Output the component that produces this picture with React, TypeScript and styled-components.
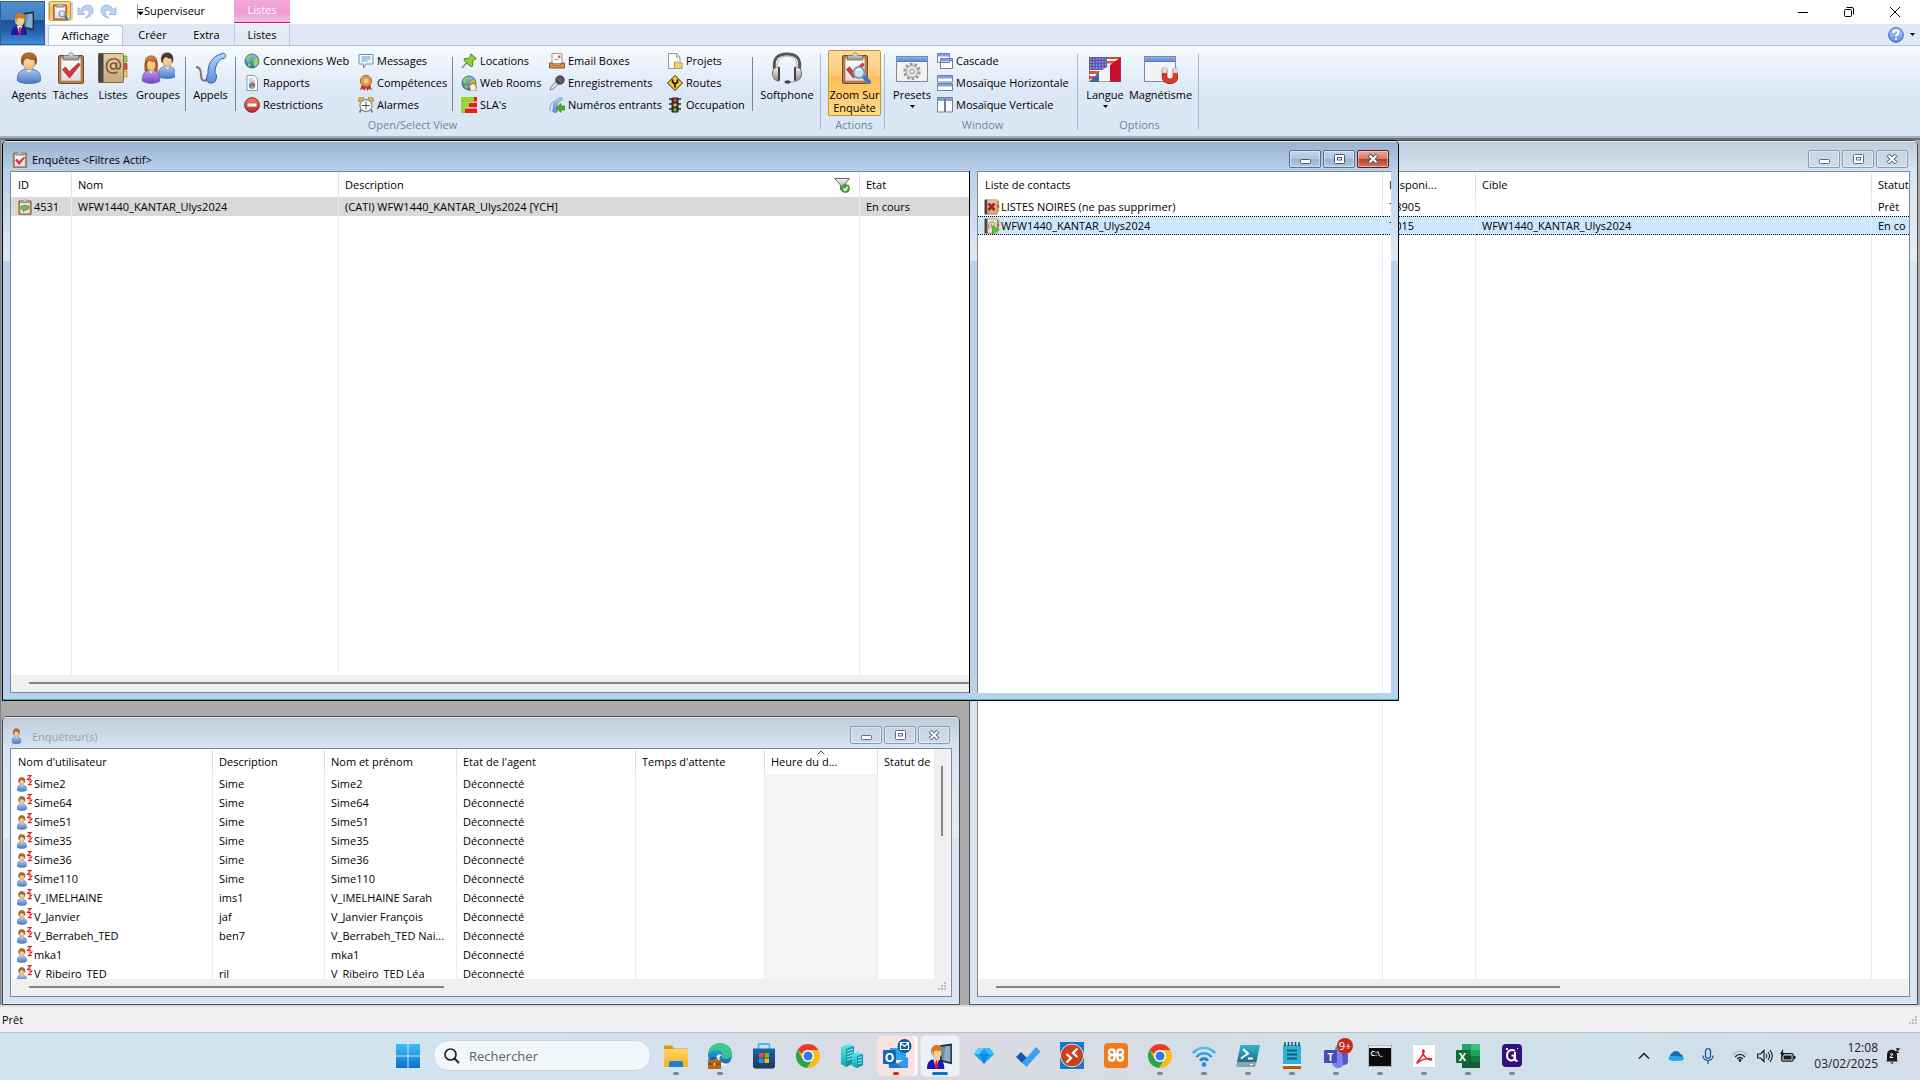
import React from "react";
import styled, { createGlobalStyle, css } from "styled-components";

const uiFont = `"Open Sans", "Noto Sans", "Liberation Sans", sans-serif`;

const GlobalStyle = createGlobalStyle`
  * { box-sizing: border-box; }
  body { margin: 0; overflow: hidden; }
  button, input { font: inherit; color: inherit; }
  button { border: 0; background: none; padding: 0; }
  svg { display: block; flex: none; }
`;

const Screen = styled.div`
  display: flex;
  flex-direction: column;
  height: 100vh;
  font-family: ${uiFont};
  font-size: 11px;
  line-height: 16px;
  color: #000;
  background: #fff;
`;

/* ---------- header ---------- */

const Header = styled.header`
  display: flex;
  flex: none;
  height: 45px;
  background: linear-gradient(#fff 24px, #dfe8f4 24px);
`;

const AppButton = styled.button`
  width: 45px;
  height: 44px;
  margin-top: 1px;
  display: flex;
  align-items: center;
  justify-content: center;
  border: 1px solid #2c5aa5;
  background: linear-gradient(#4f8fce 0, #3f7fc2 42%, #1c4f97 43%, #2660a8 70%, #3f8fd6 100%);
`;

const HeaderRows = styled.div`
  flex: 1;
  display: flex;
  flex-direction: column;
`;

const TitleRow = styled.div`
  height: 24px;
  display: flex;
  align-items: flex-start;
  padding-right: 2px;
`;

const QuickAccess = styled.div`
  width: 99px;
  display: flex;
  align-items: center;
  height: 22px;
  padding-left: 4px;
  gap: 6px;
`;

const QuickButton = styled.button<{ $on?: boolean }>`
  height: 20px;
  width: ${(p) => (p.$on ? 22 : 17)}px;
  display: flex;
  align-items: center;
  justify-content: center;
  ${(p) =>
    p.$on &&
    css`
      border: 1px solid #c29b29;
      border-radius: 2px;
      background: linear-gradient(#ffd58a, #ffbf4f 50%, #ffd27a);
      box-shadow: -2px 0 0 -1px #c8cdd6, 3px 0 0 -1px #c8cdd6;
    `}
`;

const AppTitle = styled.h1`
  width: 90px;
  margin: 0;
  font-size: 11px;
  font-weight: 400;
  line-height: 22px;
`;

const ContextLabel = styled.div`
  width: 56px;
  height: 23px;
  text-align: center;
  line-height: 20px;
  color: #fff;
  background: linear-gradient(#f3a9d5, #ee9ccf 50%, #f0b0da 80%, #f3c0e2);
  border-bottom: 1px solid #d0107f;
`;

const Spacer = styled.div`
  flex: 1;
`;

const CaptionButton = styled.button`
  width: 46px;
  height: 24px;
  display: flex;
  align-items: center;
  justify-content: center;
`;

const TabRow = styled.nav`
  height: 21px;
  display: flex;
  align-items: flex-end;
  padding-left: 3px;
`;

const Tab = styled.button<{ $w: number; $active?: boolean; $context?: boolean }>`
  width: ${(p) => p.$w}px;
  height: ${(p) => (p.$active ? 20 : 21)}px;
  line-height: 20px;
  ${(p) =>
    p.$active &&
    css`
      border: 1px solid #b3c6dc;
      border-bottom: 0;
      border-radius: 3px 3px 0 0;
      background: #f8fbff;
      line-height: 19px;
    `}
  ${(p) =>
    p.$context &&
    css`
      margin-left: 3px;
      border-left: 1px solid #c0cbdc;
      border-right: 1px solid #c0cbdc;
      background: linear-gradient(#e9edf7, #dfe8f4);
    `}
`;

const HelpButtons = styled.div`
  display: flex;
  align-items: center;
  height: 21px;
  gap: 6px;
  padding-right: 5px;
`;

/* ---------- ribbon ---------- */

const Ribbon = styled.section`
  flex: none;
  height: 93px;
  display: flex;
  padding: 0 0 0 2px;
  border-top: 1px solid #b3c6dc;
  border-bottom: 2px solid #9fb0c6;
  background: linear-gradient(#f8fbff 0, #e8f1fb 24px, #dce7f5 48px, #dce7f5 100%);
`;

const Group = styled.div`
  display: flex;
  flex-direction: column;
  padding: 4px 3px 0 6px;
  background: linear-gradient(#a5b9d2, #a5b9d2) right 8px / 1px 76px no-repeat;
  border-right: 1px solid transparent;
  background-origin: border-box;
`;

const GroupBody = styled.div`
  display: flex;
  height: 67px;
`;

const GroupLabel = styled.div`
  text-align: center;
  color: #72839c;
  line-height: 16px;
`;

const BigButton = styled.button<{ $w: number; $on?: boolean }>`
  width: ${(p) => p.$w}px;
  height: 66px;
  display: flex;
  flex-direction: column;
  align-items: center;
  gap: 4px;
  padding-top: 2px;
  line-height: 13px;
  white-space: nowrap;
  ${(p) =>
    p.$on &&
    css`
      margin-left: 1px;
      padding-top: 1px;
      border: 1px solid #c29b29;
      border-radius: 2px;
      background: linear-gradient(#fdd9a0, #fecb7c 38%, #ffbe55 40%, #ffd98b);
    `}
`;

const Rule = styled.span`
  width: 1px;
  height: 54px;
  margin: 7px 4px 0;
  background: #7d858f;
`;

const SmallColumn = styled.div<{ $w: number }>`
  width: ${(p) => p.$w}px;
  display: flex;
  flex-direction: column;
`;

const SmallButton = styled.button`
  height: 22px;
  display: flex;
  align-items: center;
  gap: 3px;
  padding-left: 4px;
  white-space: nowrap;
`;

/* ---------- MDI area ---------- */

const Workspace = styled.main`
  flex: 1;
  position: relative;
  min-height: 0;
  overflow: hidden;
  border-top: 2px solid #6f6f6f;
  background: #ababab;
  box-shadow: inset 1px 0 0 #808080;
`;

const activeFrame = "linear-gradient(#b9d1ea, #dfe9f5 90px, #b9d1ea 90px)";
const idleFrame = "linear-gradient(#d7e4f2, #e6eef7 90px, #d7e4f2 90px)";

const MdiWindow = styled.section<{ $active?: boolean }>`
  position: absolute;
  display: flex;
  flex-direction: column;
  overflow: hidden;
  border: 1px solid ${(p) => (p.$active ? "#000" : "#4a4a4a")};
  border-radius: 5px 5px 0 0;
`;

const SurveyWindow = styled(MdiWindow)`
  left: 2px;
  top: 0;
  width: 1397px;
  height: 561px;
  pointer-events: none;
`;

const AgentWindow = styled(MdiWindow)`
  left: 2px;
  bottom: 0;
  width: 958px;
  height: 289px;
`;

const ContactWindow = styled(MdiWindow)`
  left: 969px;
  right: 2px;
  top: 0;
  bottom: 0;
`;

const WindowTitle = styled.div<{ $active?: boolean; $tall?: boolean }>`
  flex: none;
  height: ${(p) => (p.$tall ? 31 : 30)}px;
  display: flex;
  gap: 2px;
  padding: 9px 9px 0;
  line-height: ${(p) => (p.$tall ? 22 : 20)}px;
  color: ${(p) => (p.$active ? "#000" : "#9a9fa6")};
  background: ${(p) =>
    p.$active ? "linear-gradient(#98b2d0, #b9d1ea)" : "linear-gradient(#bfcddb, #d7e4f2)"};
  box-shadow: inset 0 1px 0 #e8eff7;
`;

const WindowName = styled.h2`
  flex: 1;
  margin: 0;
  font-size: inherit;
  font-weight: 400;
`;

const WindowButton = styled.button<{ $active?: boolean; $close?: boolean }>`
  width: 32px;
  height: 18px;
  display: flex;
  align-items: center;
  justify-content: center;
  border-radius: 2px;
  border: 1px solid ${(p) => (p.$active ? (p.$close ? "#5c1620" : "#5a6f8c") : "#8797b4")};
  box-shadow: inset 0 0 0 1px rgba(255, 255, 255, 0.45);
  background: ${(p) =>
    p.$active
      ? p.$close
        ? "linear-gradient(#e9a99a, #d9796a 48%, #b8381f 50%, #d4765f)"
        : "linear-gradient(#c3d4e8, #b2c8e0 48%, #96b1d0 50%, #b1cae4)"
      : "linear-gradient(#c8d4e1, #cfdbe9)"};
`;

const WindowMiddle = styled.div`
  flex: 1;
  min-height: 0;
  display: flex;
`;

const Side = styled.span<{ $active?: boolean }>`
  flex: none;
  width: 7px;
  background: ${(p) => (p.$active ? activeFrame : idleFrame)};
`;

const Splitter = styled.span`
  flex: none;
  width: 8px;
  border-left: 1px solid #000;
  background: ${activeFrame};
`;

const Opening = styled.div`
  flex: 1;
`;

const WindowFoot = styled.div<{ $active?: boolean }>`
  flex: none;
  height: 7px;
  background: ${(p) => (p.$active ? "#b9d1ea" : "#d7e4f2")};
  border-bottom: 1px solid ${(p) => (p.$active ? "#38b8d0" : "#e6eef7")};
`;

const Client = styled.div<{ $open?: boolean }>`
  flex: ${(p) => (p.$open ? "0 0 959px" : 1)};
  min-width: 0;
  display: flex;
  flex-direction: column;
  border: 1px solid #828790;
  border-right-width: ${(p) => (p.$open ? 0 : 1)}px;
  background: #fff;
`;

const ListArea = styled.div`
  flex: 1;
  min-height: 0;
  display: flex;
  overflow: hidden;
`;

const TableHolder = styled.div`
  flex: 1;
  min-width: 0;
  overflow: hidden;
`;

const Table = styled.table`
  width: 100%;
  height: 100%;
  table-layout: fixed;
  border-collapse: separate;
  border-spacing: 0;
`;

const HeadCell = styled.th`
  height: 25px;
  padding: 1px 0 0 6px;
  text-align: left;
  font-weight: 400;
  white-space: nowrap;
  overflow: hidden;
  position: relative;
  border-right: 1px solid #e2e2e2;
  &:first-child { padding-left: 7px; }
  &:last-child { border-right: 0; }
`;

const HeadContent = styled.span`
  display: flex;
  align-items: center;
  justify-content: space-between;
  padding-right: 9px;
`;

const SortMark = styled.span`
  position: absolute;
  top: 1px;
  left: 46%;
`;

const Row = styled.tr<{ $state?: "grey" | "blue" }>`
  height: 19px;
  ${(p) => p.$state === "grey" && "background: #d9d9d9;"}
  ${(p) =>
    p.$state === "blue" &&
    css`
      background: #cce8ff;
      & > td { border-top: 1px dotted #000; border-bottom: 1px dotted #000; }
    `}
`;

const Cell = styled.td<{ $shade?: boolean }>`
  padding: 0 0 0 6px;
  overflow: hidden;
  white-space: nowrap;
  line-height: 17px;
  border-right: 1px solid #e5effb;
  ${(p) => p.$shade && "background: #f5f5f5;"}
  &:last-child { border-right: 0; }
`;

const IconText = styled.span`
  display: flex;
  align-items: center;
  gap: 1px;
`;

const HScroll = styled.div<{ $flush?: boolean }>`
  flex: none;
  height: 17px;
  display: flex;
  align-items: center;
  justify-content: space-between;
  padding: 0 ${(p) => (p.$flush ? 0 : 4)}px 2px 18px;
  background: #f0f0f0;
`;

const HThumb = styled.span<{ $w: string }>`
  width: ${(p) => p.$w};
  height: 2px;
  background: #858585;
`;

const VScroll = styled.div`
  flex: none;
  width: 17px;
  padding: 17px 0 0 7px;
  background: #f0f0f0;
`;

const VThumb = styled.span`
  display: block;
  width: 2px;
  height: 70px;
  background: #858585;
`;

const StatusBar = styled.footer`
  flex: none;
  height: 27px;
  display: flex;
  align-items: center;
  justify-content: space-between;
  padding: 1px 2px 0;
  background: #f0f0f0;
  border-top: 2px solid #dcdcdc;
`;

/* ---------- taskbar ---------- */

const Taskbar = styled.div`
  flex: none;
  height: 48px;
  display: grid;
  grid-template-columns: 1fr auto 1fr;
  align-items: center;
  padding-bottom: 2px;
  border-top: 1px solid #b4c1cd;
  background: linear-gradient(90deg, #d0e5ef 0, #d2e4ef 22%, #d5e1ee 36%, #d9dae0 48%, #d8dbe2 56%, #d2e0ea 68%, #cfe1ea 84%, #d3deea 100%);
`;

const TaskItems = styled.div`
  grid-column: 2;
  display: flex;
  align-items: center;
`;

const TaskButton = styled.button<{ $tone?: "alert" | "active" }>`
  position: relative;
  width: 38px;
  height: 40px;
  margin: 0 3px;
  display: flex;
  align-items: center;
  justify-content: center;
  border-radius: 4px;
  ${(p) => p.$tone === "alert" && "background: #fbe3e5; box-shadow: 2px 0 0 #fff, 3px 0 0 #fbe3e5;"}
  ${(p) => p.$tone === "active" && "background: #edf1f6; box-shadow: 0 0 0 1px #dfe4ea;"}
`;

const RunMark = styled.span<{ $kind: "run" | "active" | "alert" }>`
  position: absolute;
  bottom: 1px;
  left: 50%;
  width: ${(p) => (p.$kind === "active" ? 16 : 6)}px;
  height: 3px;
  border-radius: 2px;
  transform: translateX(-50%);
  background: ${(p) => ({ run: "#7f868c", active: "#0a74d0", alert: "#c42b1c" })[p.$kind]};
`;

const Badge = styled.span`
  position: absolute;
  top: 2px;
  right: 2px;
  width: 16px;
  height: 16px;
  border-radius: 8px;
  background: #c42b1c;
  color: #fff;
  font-size: 11px;
  line-height: 16px;
  text-align: center;
`;

const SearchBox = styled.label`
  width: 218px;
  height: 31px;
  margin: 0 3px;
  display: flex;
  align-items: center;
  gap: 9px;
  padding-left: 10px;
  border-radius: 16px;
  border: 1px solid #c9d6e0;
  background: #f2f7fb;
`;

const SearchInput = styled.input`
  flex: 1;
  min-width: 0;
  border: 0;
  padding: 0;
  outline: 0;
  background: transparent;
  font-size: 13px;
  &::placeholder { color: #5d6063; opacity: 1; }
`;

const Tray = styled.div`
  justify-self: end;
  display: flex;
  align-items: center;
  padding-right: 19px;
`;

const TrayButton = styled.button<{ $w: number }>`
  width: ${(p) => p.$w}px;
  height: 32px;
  display: flex;
  align-items: center;
  justify-content: center;
`;

const Clock = styled.time`
  width: 77px;
  margin-right: 6px;
  text-align: right;
  font-size: 12px;
  line-height: 16px;
  color: #1b1b1b;
`;

/* ---------- icons ---------- */

type SvgProps = { w?: number; h?: number; box?: string; children: React.ReactNode };
const Svg = ({ w = 16, h, box, children }: SvgProps) => (
  <svg width={w} height={h ?? w} viewBox={box ?? `0 0 ${w} ${h ?? w}`} fill="none" aria-hidden="true">
    {children}
  </svg>
);

const PaintSheet = styled.svg`
  position: absolute;
`;

const lin = (id: string, a: string, b: string) => (
  <linearGradient id={id} x1="0" y1="0" x2="0" y2="1">
    <stop offset="0" stopColor={a} />
    <stop offset="1" stopColor={b} />
  </linearGradient>
);

const SharedPaint = () => (
  <PaintSheet width="0" height="0" aria-hidden="true">
    <defs>
      {lin("bodyBlue", "#a9c6f2", "#4a78c4")}
      {lin("bodyViolet", "#c79bea", "#7a3fc0")}
      {lin("hairBrown", "#c17a32", "#7a4310")}
      {lin("hairRed", "#e08a3a", "#a5500f")}
      {lin("hairDark", "#4a4a4a", "#1a1a1a")}
      {lin("skin", "#fde0b6", "#f0b878")}
      {lin("paper", "#ffffff", "#dcdce2")}
      {lin("book", "#e5cda8", "#c9a878")}
      {lin("phone", "#b8d3fa", "#5a8ce0")}
      {lin("globe", "#8fc0f5", "#2f6cc0")}
      {lin("red", "#f08070", "#b82a20")}
      {lin("steel", "#f4f4f4", "#8a8a8a")}
      {lin("winBar", "#8db3f0", "#4d7bd0")}
      {lin("folder", "#ffd766", "#f2b01e")}
      {lin("winLogo", "#3ec0f8", "#0a6fd0")}
      {lin("edge", "#2fc2d8", "#0d5bb5")}
      {lin("store", "#1b67b0", "#1d3563")}
      {lin("azure", "#5fe8e8", "#10a5b5")}
      {lin("wifi", "#4dc4fa", "#1578d8")}
      {lin("psh", "#35b5d0", "#1b6d92")}
    </defs>
  </PaintSheet>
);

const Person = ({ hair = "hairBrown", body = "bodyBlue" }) => (
  <g>
    <path d="M4.500 29c-1-8 3-12 11.500-12s12.500 4 11.500 12c-5 3.500-18 3.500-23 0z" fill={`url(#${body})`} stroke="#47689c" strokeWidth=".8" />
    <path d="M12 16l4 4.500 4-4.500z" fill="#fff" />
    <ellipse cx="16" cy="10.500" rx="6" ry="7.500" fill="url(#skin)" stroke="#a36a2e" strokeWidth=".6" />
    <path d="M8.800 12C7 5 10 .5 16.500.8 23 1 25 6 23 12.500c-.8-1-.8-3.500-1.200-5-3 .5-6-.4-8-1.700C12 7.500 10 8 9.800 13z" fill={`url(#${hair})`} stroke="#5c3209" strokeWidth=".5" />
  </g>
);

const Clipboard = ({ tick = true }) => (
  <g>
    <rect x="3.500" y="3.500" width="25" height="28" rx="1.500" fill="#b87b48" stroke="#7a4a22" />
    <rect x="6.500" y="6.500" width="19" height="22" fill="url(#paper)" stroke="#c9c9d0" strokeWidth=".6" />
    <path d="M9 3.500h4.500c0-3.500 5-3.500 5 0H23l1 4.500H8z" fill="url(#steel)" stroke="#777" strokeWidth=".8" />
    {tick && <path d="M7.500 17.500l3-2.500 3.800 4.800L23.500 11l1.700 1.800L14.500 26z" fill="#d8393a" stroke="#8e1c1c" strokeWidth=".7" />}
  </g>
);

const Magnifier = () => (
  <g>
    <path d="M24 24l6 6" stroke="#3a78cf" strokeWidth="4" strokeLinecap="round" />
    <circle cx="20" cy="20.500" r="5.500" fill="#c9e4f8" stroke="#8496a8" strokeWidth="2" />
    <path d="M17 19c1-2 3-2.500 5-1.500" stroke="#fff" strokeWidth="1.500" />
  </g>
);

const Book = () => (
  <g>
    <path d="M26 4h4v6h-4z" fill="#9bd33a" stroke="#5f8a1a" strokeWidth=".6" />
    <path d="M26 11.500h4v6h-4z" fill="#e8453c" stroke="#8e1c1c" strokeWidth=".6" />
    <path d="M26 19h4v6h-4z" fill="#f6c64a" stroke="#a87b13" strokeWidth=".6" />
    <rect x="1.500" y="1.500" width="25" height="29" rx="1" fill="url(#book)" stroke="#8a6a40" />
    <path d="M1.500 1.500h5v29h-5z" fill="#454545" />
  </g>
);

const AppGlyph = ({ size = 24 }) => (
  <Svg w={size} box="0 0 24 24">
    <path d="M12 2l11-1.500v19L12 17z" fill="#222b33" />
    <path d="M13.500 3.500l8-1v15l-8-2z" fill="#5b8fb8" />
    <path d="M17 3l4.500-.500v15L15 16z" fill="#9cc4e0" opacity=".6" />
    <path d="M0 24c0-6 2-9 8-9s8 3 8 9z" fill="#1a1ab0" />
    <path d="M6 15l2.500 9L11 15z" fill="#fff" />
    <path d="M8 16h1.500l.8 6-1.500 2-1.500-2z" fill="#e01b1b" />
    <ellipse cx="9" cy="9" rx="4.500" ry="6" fill="#fccb8e" />
    <path d="M4 10C3 4 6 1.500 10 2s5 3 4.200 5.500C11 8 8 6 6.500 7.500L6 12z" fill="#d4761a" />
    <path d="M5 8v4l4 2.500" stroke="#c9ccd2" strokeWidth="1.200" />
  </Svg>
);

const Globe = () => (
  <g>
    <circle cx="8" cy="8" r="7" fill="url(#globe)" stroke="#2c5a94" strokeWidth=".8" />
    <path d="M2 5c2-3 5-4 7-3l-1 2-3 1 1 3-3 1zM9 7l3-3 2.500 2v4l-3 4-2-2zM4 10l3 1-1 3-2-1z" fill="#9bd455" stroke="#4b8f1c" strokeWidth=".3" />
  </g>
);

const Handset = () => (
  <path d="M27 1.500c2-1 4 .5 3.500 3-.3 1.500-2 2.500-4 2.300-4.500 3.500-6.500 8-6.500 14 1.800 1.500 2 4.500.5 8-1 2.200-5 3-7.500 1.500-2-1.200-2-5 0-8.500C12.500 12 17 4.500 27 1.500z" fill="url(#phone)" stroke="#2f5cab" />
);

const icons: Record<string, React.ReactNode> = {
  agent: <Svg w={32}><Person /></Svg>,
  tasks: <Svg w={32}><Clipboard /></Svg>,
  book: (
    <Svg w={32}>
      <Book />
      <circle cx="16.500" cy="14" r="3" stroke="#7b5a34" strokeWidth="1.600" />
      <path d="M19.500 10.500V15c0 3 4 2.500 4-1.500 0-9-14-9-14 .5 0 7 6 8.500 11 6" stroke="#7b5a34" strokeWidth="1.600" />
    </Svg>
  ),
  groups: (
    <Svg w={34} h={32} box="0 0 34 32">
      <g transform="translate(14 0) scale(.76 .84)"><Person hair="hairDark" /></g>
      <g transform="translate(-2 3) scale(.76 .9)">
        <path d="M8 20C5 8 9 1 16 1s11 7 8 19z" fill="url(#hairRed)" />
        <Person hair="hairRed" body="bodyViolet" />
      </g>
    </Svg>
  ),
  calls: (
    <Svg w={32}>
      <path d="M1 15c4 0 5 3 5 8 0 6 3 7 7 4" stroke="#777" strokeWidth="2" />
      <Handset />
    </Svg>
  ),
  headset: (
    <Svg w={32}>
      <path d="M4 19C1 6 7 2 16 2s15 4 12 17" stroke="#555" strokeWidth="3" />
      <path d="M6 14C6 7 10 4 16 4s10 3 10 10" stroke="#aaa" strokeWidth="1" />
      <path d="M1.500 21c0-4 3-6 6.500-6v14c-4 0-6.500-3-6.500-8zM30.500 21c0-4-3-6-6.500-6v14c4 0 6.500-3 6.500-8z" fill="url(#steel)" stroke="#666" />
      <path d="M7 15.500h2v13H7zM23 15.500h2v13h-2z" fill="#3f3f3f" />
      <path d="M27 28c-3 2-6 2-9 2" stroke="#999" /><ellipse cx="16.500" cy="30" rx="3" ry="1.700" fill="#444" />
    </Svg>
  ),
  zoom: <Svg w={32}><Clipboard /><Magnifier /></Svg>,
  presets: (
    <Svg w={32}>
      <rect x=".5" y="4.500" width="31" height="25" fill="#f3f3f5" stroke="#808898" />
      <path d="M1 5h30v5H1z" fill="url(#winBar)" />
      <circle cx="16" cy="19.500" r="7.500" stroke="#9a9a9a" strokeWidth="2.500" strokeDasharray="2.800 1.900" />
      <circle cx="16" cy="19.500" r="6" fill="#e4e4e6" stroke="#9a9a9a" />
      <circle cx="16" cy="19.500" r="2" fill="#fff" stroke="#8a8a8a" />
    </Svg>
  ),
  flags: (
    <Svg w={32}>
      <path d="M0 5h32v25H0z" fill="#fff" />
      <path d="M0 19h12v3H0zM0 24h9v3H0zM18 5h14v2H18zM18 9h10v2.500H18zM18 14h5v2h-5z" fill="#ee4b3a" />
      <path d="M0 5h18v13H0z" fill="#5a5ab4" />
      <path d="M1 7h16M1 10h16M1 13h16M1 16h16" stroke="#b8b8e8" strokeDasharray="1.500 1.500" />
      <path d="M0 30L10 20v10z" fill="#2f6fb0" /><path d="M10 20L21 13v17H10z" fill="#f4f4f8" /><path d="M21 13L32 5v25H21z" fill="#c8102e" />
      <path d="M.5 5.500h31v24H.5z" stroke="#8a4a5a" strokeWidth=".6" />
    </Svg>
  ),
  magnet: (
    <Svg w={34} h={32} box="0 0 34 32">
      <rect x=".5" y="4.500" width="31" height="25" fill="#f3f3f5" stroke="#808898" />
      <path d="M1 5h30v5H1z" fill="url(#winBar)" />
      <path d="M20.500 18v6.500c0 6.500 11 6.500 11 0V18" stroke="#7d1207" strokeWidth="5.500" />
      <path d="M20.500 18v6.500c0 6.500 11 6.500 11 0V18" stroke="#e23a18" strokeWidth="4.500" />
      <path d="M18 16h5v5h-5zM29 16h5v5h-5z" fill="#ddd" stroke="#999" strokeWidth=".5" />
    </Svg>
  ),
  globe: <Svg><Globe /></Svg>,
  report: <Svg><path d="M3 .5h7.500L13.500 4v11.500H3z" fill="#fafafa" stroke="#999" /><path d="M5 4h4M5 6h6" stroke="#aaa" /><circle cx="8" cy="10.500" r="3.200" fill="#4b8ae0" /><path d="M8 10.500V7.300a3.200 3.200 0 013 4z" fill="#e8453c" /><path d="M8 10.500l3 .8a3.200 3.200 0 01-4.500 2z" fill="#69c23a" /></Svg>,
  forbid: <Svg><circle cx="8" cy="8" r="7.300" fill="url(#red)" stroke="#8e2018" /><rect x="3.500" y="6.500" width="9" height="3" rx=".5" fill="#fff" /></Svg>,
  message: <Svg><path d="M1 1.500h14v9.500H8l-2.500 4V11H1z" fill="#eef6ff" stroke="#6f8dad" /><path d="M3.500 4h9M3.500 6h9M3.500 8h6" stroke="#5f9ad8" /></Svg>,
  medal: <Svg><path d="M4 9l-2 6 3-1 2 2 1-4 1 4 2-2 3 1-2-6z" fill="#cf3228" /><circle cx="8" cy="6" r="5.500" fill="#e5a65c" stroke="#9a6224" /><circle cx="8" cy="6" r="3.200" fill="#f3c98c" stroke="#b87b38" strokeWidth=".7" /></Svg>,
  alarm: <Svg><path d="M1 5a3 3 0 015-4zM15 5a3 3 0 00-5-4z" fill="#f0b930" stroke="#8a6a1a" strokeWidth=".6" /><path d="M3 13l-1.500 2.500M13 13l1.500 2.500" stroke="#666" strokeWidth="1.500" /><circle cx="8" cy="8.500" r="6" fill="#fff" stroke="#8a9098" strokeWidth="1.300" /><path d="M8 4.500v8M4 8.500h8" stroke="#555" /></Svg>,
  pin: <Svg><path d="M1 15l5-5.500" stroke="#8a8a8a" strokeWidth="1.500" /><path d="M10 .8l5.300 5-2 .7-2 2.500.3 4-2 .5L3 7.500l.5-2 4 .2L9.500 3z" fill="#8fd236" stroke="#4c8414" /></Svg>,
  webroom: <Svg><Globe /><path d="M7.500 12L12 8l4 4-1 .5V16H9v-3.500z" fill="#f5f0e8" stroke="#b0622a" strokeWidth=".8" /><path d="M7 12l5-4.500L16 12" stroke="#e07a2a" strokeWidth="1.300" /></Svg>,
  sla: <Svg><path d="M0 0h16v4.500H0zM0 5.700h16v4.500H0zM0 11.500h16V16H0z" fill="#e81c10" /><path d="M0 0h13v4.500H0zM0 5.700h8v4.500H0zM0 11.500h4V16H0z" fill="#8be01e" /></Svg>,
  mailbox: <Svg><path d="M3 .5h10v10H3z" fill="#fafafa" stroke="#999" /><path d="M9 2.500h2.500V5H9z" fill="#e06050" /><path d="M5 6.500h5" stroke="#aaa" /><path d="M.5 10h3l1 2h7l1-2h3v5H.5z" fill="#d8924e" stroke="#8a5220" /></Svg>,
  mic: <Svg><path d="M1 15l1-3 5-6 3 3-6 5z" fill="#d8d8d8" stroke="#777" strokeWidth=".8" /><circle cx="11" cy="5" r="4.300" fill="#4b4b4b" stroke="#222" strokeWidth=".6" /><path d="M8 3l5 5M10 1.500l4.500 4.500" stroke="#999" strokeWidth=".7" /></Svg>,
  inbound: <Svg><g transform="translate(-2 0) scale(.5)"><Handset /></g><path d="M1 14c-1-3 1-8 4-10" stroke="#6a94d8" /><path d="M7 11l5-4.500V9h4v4h-4v2.500z" fill="#4caf2a" stroke="#2b7a12" strokeWidth=".6" /></Svg>,
  project: <Svg><path d="M1.500.5h8L13 4v11.500H1.500z" fill="#fafafa" stroke="#999" /><path d="M9.500.5V4H13" stroke="#999" /><path d="M7.500 9h3l1 1H15v5.500H7.500z" fill="#f3d273" stroke="#b8922c" strokeWidth=".8" /></Svg>,
  route: <Svg><path d="M8 .5L15.500 8 8 15.500.5 8z" fill="#f5d020" stroke="#222" /><path d="M8 12.500V9L5.500 7V4.500M8 9l2.500-2V4.500" stroke="#111" strokeWidth="1.700" /></Svg>,
  traffic: <Svg><path d="M2 2h12M2 7h12M2 12h12" stroke="#555" strokeWidth="2" /><rect x="4.500" y=".5" width="7" height="15" rx="1" fill="#2b2b2b" /><circle cx="8" cy="3.300" r="1.800" fill="#e83a2a" /><circle cx="8" cy="8" r="1.800" fill="#f5b93a" /><circle cx="8" cy="12.700" r="1.800" fill="#58c83a" /></Svg>,
  cascade: <Svg><path d="M.5.5h12v9H.5zM3.500 5.500h12v10h-12z" fill="#fff" stroke="#6f7f9c" /><path d="M1 1h11v2.500H1zM4 6h11v2.500H4z" fill="#7aa2ea" /></Svg>,
  tileH: <Svg><path d="M.5.5h15v6.500H.5zM.5 8.500h15v7H.5z" fill="#fff" stroke="#6f7f9c" /><path d="M1 1h14v2.500H1zM1 9h14v2.500H1z" fill="#7aa2ea" /></Svg>,
  tileV: <Svg><path d="M.5.5h7v14.500h-7zM8.500.5h7v14.500h-7z" fill="#fff" stroke="#6f7f9c" /><path d="M1 1h6v3H1zM9 1h6v3H9z" fill="#7aa2ea" /></Svg>,
};

const Undo = ({ flip }: { flip?: boolean }) => (
  <Svg w={17}>
    <path transform={flip ? "matrix(-1 0 0 1 17 0)" : undefined} d="M1 4.500v7h7l-2.500-2.500C8 6 12 6.500 12 9.500c0 2-1.500 3.500-4 5.500 5-1 8-3.500 8-7.500C16 1 8 0 3.500 6.500z" fill="#bcd2f0" stroke="#8fb0dd" strokeWidth=".8" />
  </Svg>
);

const Arrow = () => <Svg w={5} h={3}><path d="M0 0h5L2.500 3z" fill="#000" /></Svg>;

const Filter = () => (
  <Svg>
    <path d="M.5 1.500h15L10 8v7l-3.500-2.500V8z" fill="url(#steel)" stroke="#6a6a6a" />
    <circle cx="11.500" cy="11.500" r="4" fill="#4fae32" stroke="#2d7a18" strokeWidth=".7" />
    <path d="M9.500 11.500l1.500 1.800 2.800-3.300" stroke="#fff" strokeWidth="1.400" />
  </Svg>
);

const SurveyIcon = () => (
  <Svg w={16} box="1 0 30 32">
    <Clipboard tick={false} />
    <path d="M8 14.500c4-3 12-3 16 0v4c-1.500 3-6 4-8 3.500l-3 3V21.500c-3-.5-5-1.500-5-3z" fill="#7fb84a" stroke="#4c7a26" strokeWidth="1.400" />
  </Svg>
);
const AgentIdle = () => (
  <Svg w={16} h={17}>
    <g transform="translate(-1.900 2) scale(.42 .46)"><Person /></g>
    <path d="M10.500 .6h3.500L10.500 4.400H14M11.500 6h3.300L11.500 9.600h3.300" stroke="#e81c24" strokeWidth="1.100" />
  </Svg>
);
const BlackList = () => (
  <Svg><g transform="scale(.5)"><Book /></g><path d="M4.500 4.500l6 6.500M10.500 4.500l-6 6.500" stroke="#c01515" strokeWidth="2.600" /></Svg>
);
const ActiveList = () => (
  <Svg>
    <g transform="scale(.5)"><Book /></g>
    <path d="M4 1.500h8.500v13H4z" fill="#efe4d2" />
    <path d="M5 11c-1-5 0-7 3-7s3.500 3 1.500 5M7 10c0-3 0-4 1-4" stroke="#8a7a66" strokeWidth="1" />
    <path d="M8.500 7.500l6.500 4-6.500 4z" fill="#52c830" stroke="#2f8a18" strokeWidth=".6" />
  </Svg>
);

const Grip = () => (
  <Svg w={9}><path d="M6 0h2v2H6zM6 3h2v2H6zM6 6h2v2H6zM3 3h2v2H3zM3 6h2v2H3zM0 6h2v2H0z" fill="#bcbcbc" /></Svg>
);

const Chrome = () => (
  <Svg w={24}>
    <circle cx="12" cy="12" r="12" fill="#fbbc15" />
    <path d="M12 0a12 12 0 0110.400 6H12a6 6 0 00-5.600 4L1.600 6A12 12 0 0112 0z" fill="#e33b2e" />
    <path d="M1.600 6A12 12 0 0011 24l5.500-9.500a6 6 0 01-9.700.500z" fill="#2ba24c" />
    <circle cx="12" cy="12" r="6" fill="#fff" /><circle cx="12" cy="12" r="4.600" fill="#3579ea" />
  </Svg>
);

const tasks: { name: string; mark?: "run" | "active" | "alert"; tone?: "alert" | "active"; badge?: string; icon: React.ReactNode }[] = [
  { name: "Explorateur de fichiers", mark: "run", icon: <Svg w={24}><path d="M0 1.500h8l2 3h14V22H0z" fill="#d99a12" /><path d="M0 5h24v18H0z" fill="url(#folder)" /><path d="M5 23v-4c0-1 1-2 2-2h10c1 0 2 1 2 2v4z" fill="#1f7fcf" /></Svg> },
  { name: "Microsoft Edge", mark: "run", icon: <Svg w={24} h={26} box="0 0 24 26"><circle cx="12" cy="12" r="12" fill="url(#edge)" /><path d="M12 0c8 0 12 6 12 10.500 0 3.500-3 5.500-6.500 5.500S14 14 14.500 12c.3-3-2.500-5-5.500-5-4 0-7 2-8.500 3C1.500 4 6 0 12 0z" fill="#45cf7a" opacity=".75" /><path d="M15 12c-4 0-5 5-1 7.500 3 2 6 1 8-.5-3 6-9 5.500-12 3s-3-7 0-10.500z" fill="#e8f4fa" /><path d="M0 17h13v9H0z" fill="#b9651c" /><path d="M4 17v-2h5v2M0 21h13" stroke="#5c2f08" /><path d="M5.500 20h2v2.500h-2z" fill="#ffd24a" /></Svg> },
  { name: "Microsoft Store", icon: <Svg w={24} h={26} box="0 0 24 26"><path d="M6.500 6V2c0-.6.400-1 1-1h9c.6 0 1 .4 1 1v4" stroke="#36c0f0" strokeWidth="1.800" /><path d="M1 5.500h22V23c0 1.500-1 2.500-2.500 2.500h-17C2 25.500 1 24.500 1 23z" fill="url(#store)" /><path d="M7 10h4.500v4.500H7z" fill="#f25022" /><path d="M12.500 10H17v4.500h-4.500z" fill="#7fba00" /><path d="M7 15.500h4.500V20H7z" fill="#00a4ef" /><path d="M12.500 15.500H17V20h-4.500z" fill="#ffb900" /></Svg> },
  { name: "Google Chrome", icon: <Chrome /> },
  { name: "Serveurs", icon: <Svg w={24}><path d="M1 3l8-3 5 2v17l-8 4-5-3z" fill="url(#azure)" /><path d="M6 5l8-3v17l-8 4z" fill="#0e98a8" /><path d="M7 7l6-2M7 10l6-2M7 13l6-2M7 16l6-2" stroke="#8ff5f5" strokeWidth="1.300" /><path d="M12 10l6-2 5 2v11l-6 3-5-2z" fill="url(#azure)" /><path d="M17 12l6-2v11l-6 3z" fill="#0e98a8" /><path d="M18 14l4-1.500M18 17l4-1.500M18 20l4-1.500" stroke="#8ff5f5" strokeWidth="1.200" /></Svg> },
  { name: "Outlook", mark: "alert", tone: "alert", icon: <Svg w={32} h={34} box="-4 -6 32 34"><path d="M6 3h16v12H6z" fill="#28a8ea" /><path d="M4 12l10 7 10-7v10c0 .6-.4 1-1 1H5z" fill="#1478c8" /><path d="M13 19l11-7v10c0 .6-.400 1-1 1H18z" fill="#2f9be8" /><rect x="-1" y="5" width="13" height="14" rx="1" fill="#0f68b8" /><text x="5.500" y="16.500" fontSize="12" fontWeight="700" fill="#fff" textAnchor="middle">O</text><circle cx="20.500" cy="1" r="7" fill="#0c59a4" /><path d="M16.500-2.500h8v7h-8zM16.500-2l4 3.500 4-3.500" stroke="#fff" strokeWidth="1.200" /></Svg> },
  { name: "Superviseur", mark: "active", tone: "active", icon: <AppGlyph size={26} /> },
  { name: "Diamant", icon: <Svg w={20} h={18} box="0 0 20 18"><path d="M4.500 1h11L20 7l-10 10L0 7z" fill="#12a6f5" /><path d="M4.500 1H10L5.500 7H0z" fill="#5bd2fd" /><path d="M10 1h5.500L20 7h-5.500z" fill="#34c2fa" /><path d="M5.500 7h9L10 17z" fill="#1183e8" /></Svg> },
  { name: "Microsoft To Do", icon: <Svg w={26} h={22} box="0 0 26 22"><path d="M1 12l5-5 6 6-5 5z" fill="#1b55b0" /><path d="M7 18L21 2l4.500 4.500L11.500 22z" fill="#3ba0f0" /></Svg> },
  { name: "Bureau à distance", icon: <Svg w={24} h={27} box="0 0 24 27"><path d="M0 0h24v27H0z" fill="#0e7ad4" /><circle cx="12" cy="13.500" r="11.800" fill="#fff" /><circle cx="12" cy="13.500" r="11" fill="#c8431b" /><path d="M6.500 12l4.500 4-4.500 4.500M17.500 6.500L13 11l4.500 4" stroke="#fff" strokeWidth="2.200" /></Svg> },
  { name: "XAMPP", icon: <Svg w={24} h={27} box="0 0 24 27"><rect y="1" width="24" height="25" rx="4" fill="#f07a1c" /><path d="M8 7.500c-4-.5-4 5 0 5.500h8c4-.5 4-6 0-5.500-2 0-2.500 1.500-2.500 3v5c0 1.500.5 3 2.500 3 4 .5 4-5 0-5.500H8c-4 .5-4 6 0 5.500 2 0 2.500-1.500 2.500-3v-5c0-1.500-.5-3-2.500-3z" stroke="#fff" strokeWidth="2.400" /></Svg> },
  { name: "Google Chrome (profil)", mark: "run", icon: <Chrome /> },
  { name: "Wi-Fi", mark: "run", icon: <Svg w={24} h={22} box="0 0 24 22"><path d="M1 8c6-7 16-7 22 0M4.500 12c4-5 11-5 15 0M8 15.500c2.500-2.500 5.500-2.500 8 0" stroke="url(#wifi)" strokeWidth="2.700" /><circle cx="12" cy="19.500" r="2.300" fill="#1b8ce8" /></Svg> },
  { name: "PowerShell", mark: "run", icon: <Svg w={24} h={24}><path d="M4.500 1H24l-3.500 17H1z" fill="url(#psh)" /><path d="M1 18h19.500L19 23H0z" fill="#8fa3ae" /><path d="M14 20.500h3" stroke="#fff" /><path d="M7 5l5 4.500-7 5M12 14.500h5" stroke="#fff" strokeWidth="1.900" /></Svg> },
  { name: "Bloc-notes", mark: "run", icon: <Svg w={20} h={28} box="0 0 20 28"><path d="M1 3h18v22H1z" fill="#2cb5d8" /><path d="M1 24h18v3H1z" fill="#b5581c" /><path d="M1 22h18v2H1z" fill="#e8f6fa" /><path d="M3 0v4M6.500 0v4M10 0v4M13.500 0v4M17 0v4" stroke="#14506a" strokeWidth="1.500" /><path d="M5 8.500h10M5 12.500h10M5 16.500h10" stroke="#0c5a78" strokeWidth="2" /></Svg> },
  { name: "Teams", mark: "run", badge: "9+", icon: <Svg w={24}><circle cx="15" cy="5" r="4" fill="#7b83eb" /><path d="M8 9h12v9c0 4-3 6-6 6s-6-2-6-6z" fill="#7b83eb" /><path d="M18 10h6v7c0 3-2 4-5 4z" fill="#5059c9" /><rect y="6" width="13" height="13" rx="1" fill="#454eb8" /><text x="6.500" y="16.500" fontSize="10" fontWeight="700" fill="#fff" textAnchor="middle">T</text></Svg> },
  { name: "Invite de commandes", mark: "run", icon: <Svg w={24} h={22} box="0 0 24 22"><path d="M0 0h24v22H0z" fill="#0c0c0c" /><path d="M.5.5h23v21H.5z" stroke="#b8bcc0" /><path d="M1 1h22v2H1z" fill="#e8e8e8" /><text x="2.500" y="11" fontSize="7" fontWeight="700" fill="#fff">C:\_</text></Svg> },
  { name: "Adobe Acrobat", mark: "run", icon: <Svg w={24}><rect x=".5" y=".5" width="23" height="23" rx="1" fill="#fff" stroke="#cfd4d8" /><path d="M5 19c1-3 6-7 7-11 .5-3-2-3-1 1 1 4 5 7 8 7 1.500-.5 0-2-3-1.500-4 .3-7 1.500-9.500 3.500-1 1-1.500 1.500-1.500 1z" stroke="#e01b22" strokeWidth="1.400" /></Svg> },
  { name: "Excel", mark: "run", icon: <Svg w={24}><path d="M6 0h18v24H6z" fill="#21a366" /><path d="M15 0h9v6h-9z" fill="#33c481" /><path d="M6 6h9v6H6zM15 12h9v6h-9z" fill="#107c41" /><path d="M6 12h9v12H6zM15 18h9v6h-9z" fill="#185c37" /><rect y="6" width="13" height="13" rx="1" fill="#0f6b38" /><text x="6.500" y="16.500" fontSize="11" fontWeight="700" fill="#fff" textAnchor="middle">X</text></Svg> },
  { name: "Assistant", mark: "run", icon: <Svg w={20} h={23} box="0 0 20 23"><rect width="20" height="23" rx="4" fill="#34107a" /><path d="M13 7c-4-2.500-8 0-8 4.500s4.500 6.500 7.500 3.500v-3.500h-3M13 8v7c0 1.500 1 2 2.500 2" stroke="#fff" strokeWidth="2" /><path d="M4 4h2v2H4zM15 4h1v1h-1z" fill="#fff" /></Svg> },
];

/* ---------- pieces ---------- */

const Big = ({ icon, w, label, arrow, on }: { icon: string; w: number; label: React.ReactNode; arrow?: boolean; on?: boolean }) => (
  <BigButton $w={w} $on={on}>
    {icons[icon]}
    <span>{label}</span>
    {arrow && <Arrow />}
  </BigButton>
);

const Column = ({ w, items }: { w: number; items: [string, string][] }) => (
  <SmallColumn $w={w}>
    {items.map(([icon, label]) => (
      <SmallButton key={label}>
        {icons[icon]}
        {label}
      </SmallButton>
    ))}
  </SmallColumn>
);

const WindowButtons = ({ active }: { active?: boolean }) => {
  const line = active ? "#4a5468" : "#5f6880";
  return (
    <>
      <WindowButton $active={active} aria-label="Réduire">
        <Svg w={11} h={11}><rect x=".5" y="5.500" width="10" height="4" rx="1" fill="#fff" stroke={line} /></Svg>
      </WindowButton>
      <WindowButton $active={active} aria-label="Agrandir">
        <Svg w={11} h={10}><rect x=".5" y=".5" width="10" height="9" rx="1" fill="#fff" stroke={line} /><rect x="3.500" y="3.500" width="4" height="2.500" stroke={line} /></Svg>
      </WindowButton>
      <WindowButton $active={active} $close aria-label="Fermer">
        <Svg w={12} h={10}>
          <path d="M2 1l8 8M10 1L2 9" stroke={line} strokeWidth="4" />
          <path d="M2.500 1.500l7 7M9.500 1.500l-7 7" stroke="#fff" strokeWidth="2" />
        </Svg>
      </WindowButton>
    </>
  );
};

type ListProps = {
  widths: (number | null)[];
  heads: React.ReactNode[];
  rows: { state?: "grey" | "blue"; cells: React.ReactNode[] }[];
  shade?: number;
};

const List = ({ widths, heads, rows, shade }: ListProps) => (
  <Table>
    <colgroup>
      {widths.map((w, i) => (
        <col key={i} width={w ?? undefined} />
      ))}
    </colgroup>
    <thead>
      <tr>{heads.map((h, i) => <HeadCell key={i}>{h}</HeadCell>)}</tr>
    </thead>
    <tbody>
      {rows.map((row, r) => (
        <Row key={r} $state={row.state}>
          {row.cells.map((c, i) => <Cell key={i} $shade={i === shade}>{c}</Cell>)}
        </Row>
      ))}
      <tr>{widths.map((_, i) => <Cell key={i} $shade={i === shade} />)}</tr>
    </tbody>
  </Table>
);

const agents = [
  ["Sime2", "Sime", "Sime2"],
  ["Sime64", "Sime", "Sime64"],
  ["Sime51", "Sime", "Sime51"],
  ["Sime35", "Sime", "Sime35"],
  ["Sime36", "Sime", "Sime36"],
  ["Sime110", "Sime", "Sime110"],
  ["V_IMELHAINE", "ims1", "V_IMELHAINE Sarah"],
  ["V_Janvier", "jaf", "V_Janvier François"],
  ["V_Berrabeh_TED", "ben7", "V_Berrabeh_TED Nai..."],
  ["mka1", "", "mka1"],
  ["V_Ribeiro_TED", "ril", "V_Ribeiro_TED Léa"],
];

export default function App() {
  return (
    <Screen>
      <GlobalStyle />
      <SharedPaint />
      <Header>
        <AppButton aria-label="Menu de l'application"><AppGlyph /></AppButton>
        <HeaderRows>
          <TitleRow>
            <QuickAccess>
              <QuickButton $on aria-label="Zoom sur enquête">
                <Svg w={17} h={17} box="2 0 30 32"><Clipboard tick={false} /><Magnifier /></Svg>
              </QuickButton>
              <QuickButton aria-label="Annuler"><Undo /></QuickButton>
              <QuickButton aria-label="Rétablir"><Undo flip /></QuickButton>
              <Spacer />
              <Svg w={7} h={14}><path d="M.5 0v14" stroke="#999" /><path d="M1 5.500h5M1 8h5L3.500 11z" stroke="#000" strokeWidth=".8" fill="#000" /></Svg>
            </QuickAccess>
            <AppTitle>Superviseur</AppTitle>
            <ContextLabel>Listes</ContextLabel>
            <Spacer />
            <CaptionButton aria-label="Réduire"><Svg w={10}><path d="M0 5.500h10" stroke="#000" /></Svg></CaptionButton>
            <CaptionButton aria-label="Restaurer"><Svg w={10}><rect x=".5" y="2.500" width="7" height="7" rx="1" stroke="#000" /><path d="M2.500.5h5.500a1.500 1.500 0 011.500 1.500v5.500" stroke="#000" /></Svg></CaptionButton>
            <CaptionButton aria-label="Fermer"><Svg w={10}><path d="M0 0l10 10M10 0L0 10" stroke="#000" /></Svg></CaptionButton>
          </TitleRow>
          <TabRow>
            <Tab $w={75} $active>Affichage</Tab>
            <Tab $w={59}>Créer</Tab>
            <Tab $w={49}>Extra</Tab>
            <Tab $w={56} $context>Listes</Tab>
            <Spacer />
            <HelpButtons>
              <button aria-label="Aide">
                <Svg><circle cx="8" cy="8" r="7.300" fill="url(#phone)" stroke="#3a5fa8" /><path d="M5.500 6c0-3.500 5-3.500 5-.500 0 2-2.500 2-2.500 4M8 11v2" stroke="#fff" strokeWidth="1.800" /></Svg>
              </button>
              <button aria-label="Options d'aide"><Arrow /></button>
            </HelpButtons>
          </TabRow>
        </HeaderRows>
      </Header>

      <Ribbon>
        <Group>
          <GroupBody>
            <Big icon="agent" w={42} label="Agents" />
            <Big icon="tasks" w={41} label="Tâches" />
            <Big icon="book" w={44} label="Listes" />
            <Big icon="groups" w={46} label="Groupes" />
            <Rule />
            <Big icon="calls" w={41} label="Appels" />
            <Rule />
            <Column w={114} items={[["globe", "Connexions Web"], ["report", "Rapports"], ["forbid", "Restrictions"]]} />
            <Column w={94} items={[["message", "Messages"], ["medal", "Compétences"], ["alarm", "Alarmes"]]} />
            <Rule />
            <Column w={88} items={[["pin", "Locations"], ["webroom", "Web Rooms"], ["sla", "SLA's"]]} />
            <Column w={118} items={[["mailbox", "Email Boxes"], ["mic", "Enregistrements"], ["inbound", "Numéros entrants"]]} />
            <Column w={85} items={[["project", "Projets"], ["route", "Routes"], ["traffic", "Occupation"]]} />
            <Rule />
            <Big icon="headset" w={60} label="Softphone" />
          </GroupBody>
          <GroupLabel>Open/Select View</GroupLabel>
        </Group>
        <Group>
          <GroupBody>
            <Big icon="zoom" w={53} on label={<>Zoom Sur<br />Enquête</>} />
          </GroupBody>
          <GroupLabel>Actions</GroupLabel>
        </Group>
        <Group>
          <GroupBody>
            <Big icon="presets" w={42} label="Presets" arrow />
            <Column w={141} items={[["cascade", "Cascade"], ["tileH", "Mosaïque Horizontale"], ["tileV", "Mosaïque Verticale"]]} />
          </GroupBody>
          <GroupLabel>Window</GroupLabel>
        </Group>
        <Group>
          <GroupBody>
            <Big icon="flags" w={42} label="Langue" arrow />
            <Big icon="magnet" w={69} label="Magnétisme" />
          </GroupBody>
          <GroupLabel>Options</GroupLabel>
        </Group>
      </Ribbon>

      <Workspace>
        <ContactWindow>
          <WindowTitle>
            <WindowName />
            <WindowButtons />
          </WindowTitle>
          <WindowMiddle>
            <Side />
            <Client>
              <ListArea>
                <TableHolder>
                  <List
                    widths={[405, 93, 396, null]}
                    heads={["Liste de contacts", "Disponi...", "Cible", "Statut"]}
                    rows={[
                      { cells: [<IconText><BlackList />LISTES NOIRES (ne pas supprimer)</IconText>, "78905", "", "Prêt"] },
                      { state: "blue", cells: [<IconText><ActiveList />WFW1440_KANTAR_Ulys2024</IconText>, "7015", "WFW1440_KANTAR_Ulys2024", "En co"] },
                    ]}
                  />
                </TableHolder>
              </ListArea>
              <HScroll><HThumb $w="62%" /></HScroll>
            </Client>
            <Side />
          </WindowMiddle>
          <WindowFoot />
        </ContactWindow>

        <AgentWindow>
          <WindowTitle $tall>
            <Svg w={18} h={19} box="4 -4 36 38"><g transform="scale(.8 1)"><Person /></g></Svg>
            <WindowName>Enquêteur(s)</WindowName>
            <WindowButtons />
          </WindowTitle>
          <WindowMiddle>
            <Side />
            <Client>
              <ListArea>
                <TableHolder>
                  <List
                    widths={[202, 112, 132, 179, 129, 113, null]}
                    shade={5}
                    heads={[
                      "Nom d'utilisateur", "Description", "Nom et prénom", "Etat de l'agent", "Temps d'attente",
                      <>Heure du d...<SortMark><Svg w={8} h={5}><path d="M.5 4.500L4 1l3.500 3.500" stroke="#555" /></Svg></SortMark></>,
                      "Statut de",
                    ]}
                    rows={agents.map(([login, desc, name]) => ({
                      cells: [<IconText><AgentIdle />{login}</IconText>, desc, name, "Déconnecté", "", "", ""],
                    }))}
                  />
                </TableHolder>
                <VScroll><VThumb /></VScroll>
              </ListArea>
              <HScroll><HThumb $w="415px" /><Grip /></HScroll>
            </Client>
            <Side />
          </WindowMiddle>
          <WindowFoot />
        </AgentWindow>

        <SurveyWindow $active>
          <WindowTitle $active>
            <Svg w={18} h={18} box="1 -2 34 34"><Clipboard /></Svg>
            <WindowName>Enquêtes &lt;Filtres Actif&gt;</WindowName>
            <WindowButtons active />
          </WindowTitle>
          <WindowMiddle>
            <Side $active />
            <Client $open>
              <ListArea>
                <TableHolder>
                  <List
                    widths={[61, 267, 521, null]}
                    heads={["ID", "Nom", <HeadContent>Description<Filter /></HeadContent>, "Etat"]}
                    rows={[
                      { state: "grey", cells: [<IconText><SurveyIcon />4531</IconText>, "WFW1440_KANTAR_Ulys2024", "(CATI) WFW1440_KANTAR_Ulys2024 [YCH]", "En cours"] },
                    ]}
                  />
                </TableHolder>
              </ListArea>
              <HScroll $flush><HThumb $w="100%" /></HScroll>
            </Client>
            <Splitter />
            <Opening />
            <Side $active />
          </WindowMiddle>
          <WindowFoot $active />
        </SurveyWindow>
      </Workspace>

      <StatusBar>
        Prêt
        <Grip />
      </StatusBar>

      <Taskbar>
        <TaskItems>
          <TaskButton aria-label="Démarrer">
            <Svg w={24}><path d="M0 0h11.500v11.500H0zM12.500 0H24v11.500H12.500zM0 12.500h11.500V24H0zM12.500 12.500H24V24H12.500z" fill="url(#winLogo)" /></Svg>
          </TaskButton>
          <SearchBox>
            <Svg><circle cx="6.500" cy="6.500" r="5.500" stroke="#222" strokeWidth="1.700" /><path d="M10.500 10.500l4.500 4.500" stroke="#222" strokeWidth="2" /></Svg>
            <SearchInput placeholder="Rechercher" aria-label="Rechercher" />
          </SearchBox>
          {tasks.map((t) => (
            <TaskButton key={t.name} aria-label={t.name} $tone={t.tone}>
              {t.icon}
              {t.badge && <Badge>{t.badge}</Badge>}
              {t.mark && <RunMark $kind={t.mark} />}
            </TaskButton>
          ))}
        </TaskItems>
        <Tray>
          <TrayButton $w={32} aria-label="Icônes cachées"><Svg w={12} h={8}><path d="M1 6.500l5-5 5 5" stroke="#1b1b1b" strokeWidth="1.500" /></Svg></TrayButton>
          <TrayButton $w={32} aria-label="OneDrive"><Svg w={16} h={11}><path d="M4 10.500a4 4 0 01-.5-7A5 5 0 0112.500 4a3.500 3.500 0 01.500 6.500z" fill="#0f6cc4" /><path d="M2 10.500c-2-1-2-4 1-4.500 3-.5 8 .5 12 1 1.500 1.500 1 3.500-1 3.500z" fill="#2aa5ee" /></Svg></TrayButton>
          <TrayButton $w={32} aria-label="Microphone"><Svg w={12} h={16}><rect x="3.500" y=".7" width="5" height="9.500" rx="2.500" stroke="#1c57a8" strokeWidth="1.300" /><path d="M1 7.500c0 6.500 10 6.500 10 0M6 12.500V16" stroke="#1c57a8" strokeWidth="1.300" /></Svg></TrayButton>
          <TrayButton $w={32} aria-label="Réseau"><Svg w={16} h={12}><path d="M1 4.500c4-4.500 10-4.500 14 0" stroke="#a9b3bb" strokeWidth="1.200" /><path d="M3 7c3-3.500 7-3.500 10 0M5.200 9c1.600-2 4-2 5.600 0" stroke="#1b1b1b" strokeWidth="1.300" /><circle cx="8" cy="10.500" r="1.400" fill="#1b1b1b" /></Svg></TrayButton>
          <TrayButton $w={18} aria-label="Volume"><Svg w={16} h={14}><path d="M.7 5v4h2.800L7 12.500v-11L3.500 5z" stroke="#1b1b1b" strokeWidth="1.200" /><path d="M9 5c1 1.300 1 2.700 0 4M11 3c2 2.500 2 5.500 0 8M13 1c3 4 3 8 0 12" stroke="#1b1b1b" strokeWidth="1.100" /></Svg></TrayButton>
          <TrayButton $w={27} aria-label="Batterie"><Svg w={16} h={14}><rect x="1.700" y="4.700" width="11.500" height="7.500" rx="1.500" stroke="#1b1b1b" strokeWidth="1.300" /><path d="M3.500 6.500h8v4h-8z" fill="#1b1b1b" /><path d="M14 7h1.500v3H14z" fill="#1b1b1b" /><path d="M3 0L0 5h2L1 9l4-5H3.200z" fill="#1b1b1b" /></Svg></TrayButton>
          <Clock>12:08<br />03/02/2025</Clock>
          <TrayButton $w={17} aria-label="Notifications"><Svg w={16}><path d="M2 12V7c0-7 10-7 10 0v5l1 1.500H1zM5 14.500h4l-2 1.500z" fill="#1b1b1b" /><path d="M5 6h3L5 9.500h3" stroke="#fff" /><path d="M11 .8h3L11 4.500h3" stroke="#1b1b1b" strokeWidth="1.200" /></Svg></TrayButton>
        </Tray>
      </Taskbar>
    </Screen>
  );
}
